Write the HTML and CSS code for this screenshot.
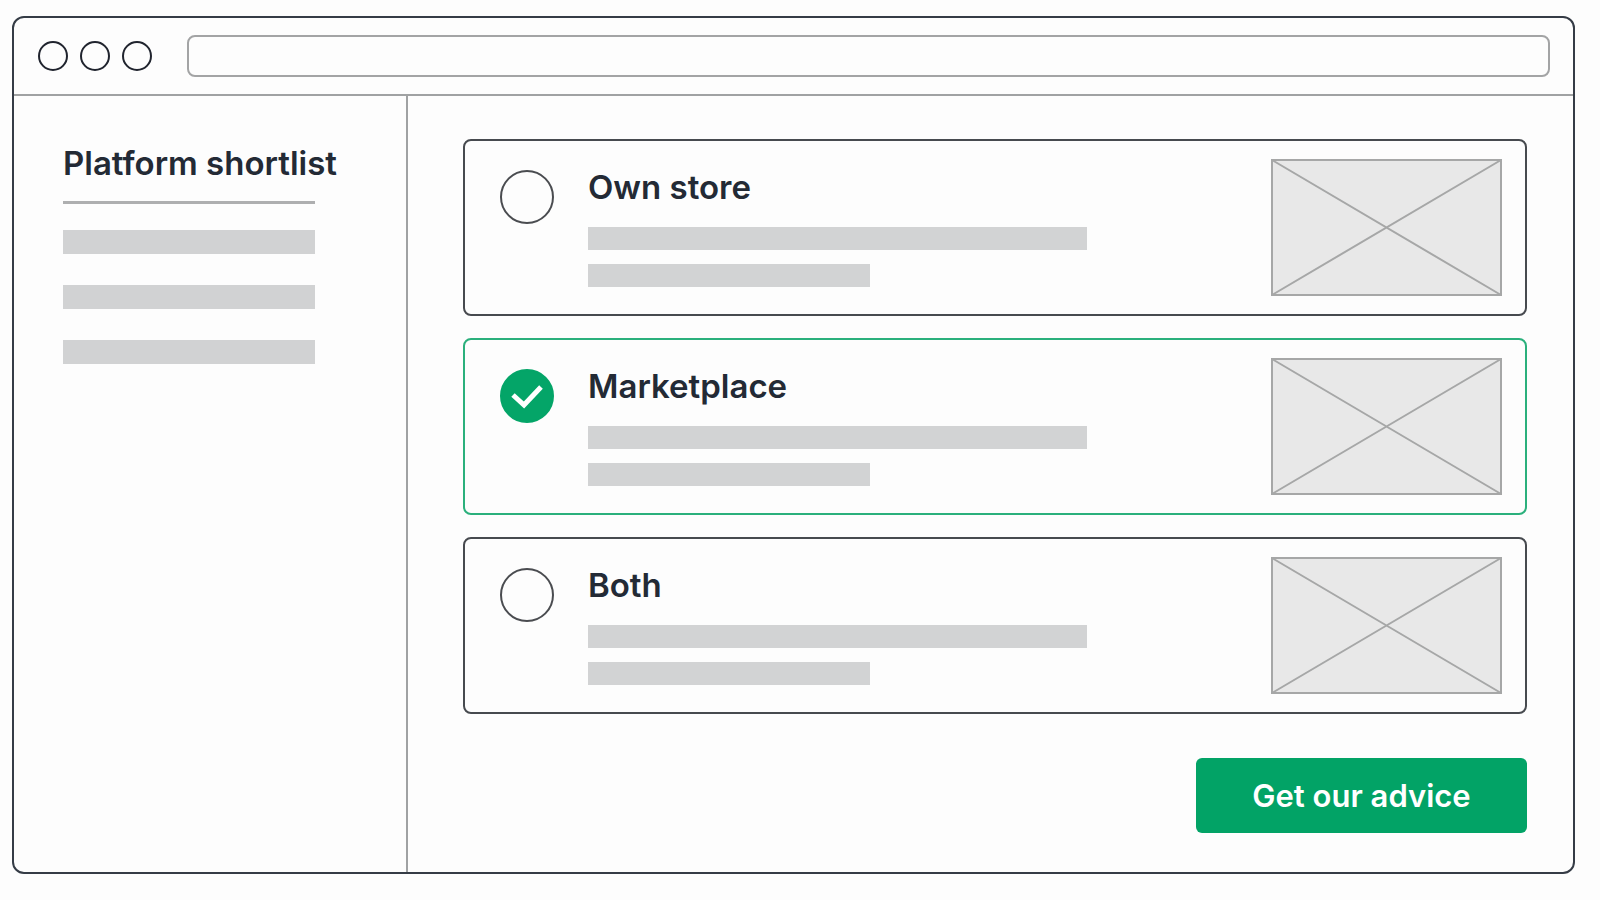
FILE: index.html
```html
<!DOCTYPE html>
<html lang="en">
    <head>
        <meta charset="utf-8">
        <title>Platform shortlist</title>
        <link rel="stylesheet" href="styles.css">
    </head>
    <body>
        <div class="window">

            <header class="toolbar">
                <div class="dots">
                    <span class="dot"></span>
                    <span class="dot"></span>
                    <span class="dot"></span>
                </div>
                <input class="address" type="text" name="address" aria-label="Address">
            </header>

            <div class="content">

                <aside class="sidebar">
                    <h1>Platform shortlist</h1>
                    <hr>
                    <div class="bar"></div>
                    <div class="bar"></div>
                    <div class="bar"></div>
                </aside>

                <form class="main" method="post" action="">

                    <label class="card">
                        <span class="radio">
                            <input type="radio" name="platform" value="store">
                            <svg viewBox="0 0 54 54"><path d="M13 26l11 10 17-18"/></svg>
                        </span>
                        <span class="text">
                            <span class="title">Own store</span>
                            <span class="line"></span>
                            <span class="line short"></span>
                        </span>
                        <svg class="thumb" viewBox="0 0 231 137" preserveAspectRatio="none">
                            <rect x="1" y="1" width="229" height="135"/>
                            <path d="M1 1l229 135M230 1L1 136"/>
                        </svg>
                    </label>

                    <label class="card">
                        <span class="radio">
                            <input type="radio" name="platform" value="marketplace" checked>
                            <svg viewBox="0 0 54 54"><path d="M13 26l11 10 17-18"/></svg>
                        </span>
                        <span class="text">
                            <span class="title">Marketplace</span>
                            <span class="line"></span>
                            <span class="line short"></span>
                        </span>
                        <svg class="thumb" viewBox="0 0 231 137" preserveAspectRatio="none">
                            <rect x="1" y="1" width="229" height="135"/>
                            <path d="M1 1l229 135M230 1L1 136"/>
                        </svg>
                    </label>

                    <label class="card">
                        <span class="radio">
                            <input type="radio" name="platform" value="both">
                            <svg viewBox="0 0 54 54"><path d="M13 26l11 10 17-18"/></svg>
                        </span>
                        <span class="text">
                            <span class="title">Both</span>
                            <span class="line"></span>
                            <span class="line short"></span>
                        </span>
                        <svg class="thumb" viewBox="0 0 231 137" preserveAspectRatio="none">
                            <rect x="1" y="1" width="229" height="135"/>
                            <path d="M1 1l229 135M230 1L1 136"/>
                        </svg>
                    </label>

                    <button type="submit">Get our advice</button>

                </form>

            </div>

        </div>
    </body>
</html>
```

FILE: styles.css
```css
* {
    box-sizing: border-box;
}

body {
    margin: 0;
    padding: 16px 25px 26px 12px;
    min-height: 100vh;
    display: flex;
    background: #fdfdfd;
    color: #232a35;
    font-family: Inter, "Liberation Sans", sans-serif;
}

.window {
    flex: 1;
    display: flex;
    flex-direction: column;
    border: 2px solid #353c46;
    border-radius: 12px;
}

/* toolbar */

.toolbar {
    display: flex;
    align-items: center;
    gap: 35px;
    padding: 17px 23px 17px 24px;
    border-bottom: 2px solid #a0a2a3;
}

.dots {
    display: flex;
    gap: 12px;
}

.dot {
    width: 30px;
    height: 30px;
    border: 2px solid #20242e;
    border-radius: 50%;
}

.address {
    flex: 1;
    min-width: 0;
    height: 42px;
    padding: 0 12px;
    border: 2px solid #a3a4a5;
    border-radius: 8px;
    background: transparent;
    font-family: inherit;
    font-size: 18px;
}

.address:focus {
    outline: 0;
}

.content {
    flex: 1;
    display: flex;
}

/* sidebar */

.sidebar {
    width: 394px;
    padding: 47px 49px;
    border-right: 2px solid #a0a2a3;
}

h1,
.title,
button {
    font-size: 33px;
    font-weight: 600;
    line-height: 40px;
}

h1 {
    margin: 0;
    white-space: nowrap;
}

hr {
    width: 252px;
    height: 3px;
    margin: 18px 0 26px;
    border: 0;
    background: #aeafb0;
}

.bar {
    width: 252px;
    height: 24px;
    margin-bottom: 31px;
    background: #d1d2d3;
}

/* options */

.main {
    flex: 1;
    display: flex;
    flex-direction: column;
    gap: 22px;
    padding: 43px 46px 38px 55px;
}

.card {
    display: flex;
    align-items: flex-start;
    gap: 34px;
    padding: 18px 23px 18px 35px;
    border: 2px solid #474a4f;
    border-radius: 8px;
    cursor: pointer;
}

.card:has(input:checked) {
    border-color: #2bb07c;
}

.radio {
    display: grid;
    width: 54px;
    height: 54px;
    margin-top: 11px;
}

.radio input,
.radio svg {
    grid-area: 1 / 1;
    width: 54px;
    height: 54px;
    margin: 0;
}

.radio input {
    appearance: none;
    border: 2px solid #4a4c50;
    border-radius: 50%;
    cursor: pointer;
}

.radio input:checked {
    border-color: #04a568;
    background: #04a568;
}

.radio svg {
    visibility: hidden;
    fill: none;
    stroke: white;
    stroke-width: 5;
    pointer-events: none;
}

.radio input:checked + svg {
    visibility: visible;
}

.text {
    flex: 1;
    min-width: 0;
    padding-top: 8px;
}

.title {
    display: block;
    margin-bottom: 20px;
}

.line {
    display: block;
    width: 499px;
    max-width: 100%;
    height: 23px;
    margin-bottom: 14px;
    background: #d2d3d4;
}

.line.short {
    width: 282px;
    margin-bottom: 0;
}

.thumb {
    width: 231px;
    height: 137px;
    fill: #e8e8e8;
    stroke: #a6a7a7;
    stroke-width: 2;
}

button {
    align-self: flex-end;
    width: 331px;
    height: 75px;
    margin-top: 22px;
    padding: 0;
    border: 0;
    border-radius: 6px;
    background: #02a366;
    color: white;
    font-family: inherit;
    font-size: 31px;
    cursor: pointer;
}
```
